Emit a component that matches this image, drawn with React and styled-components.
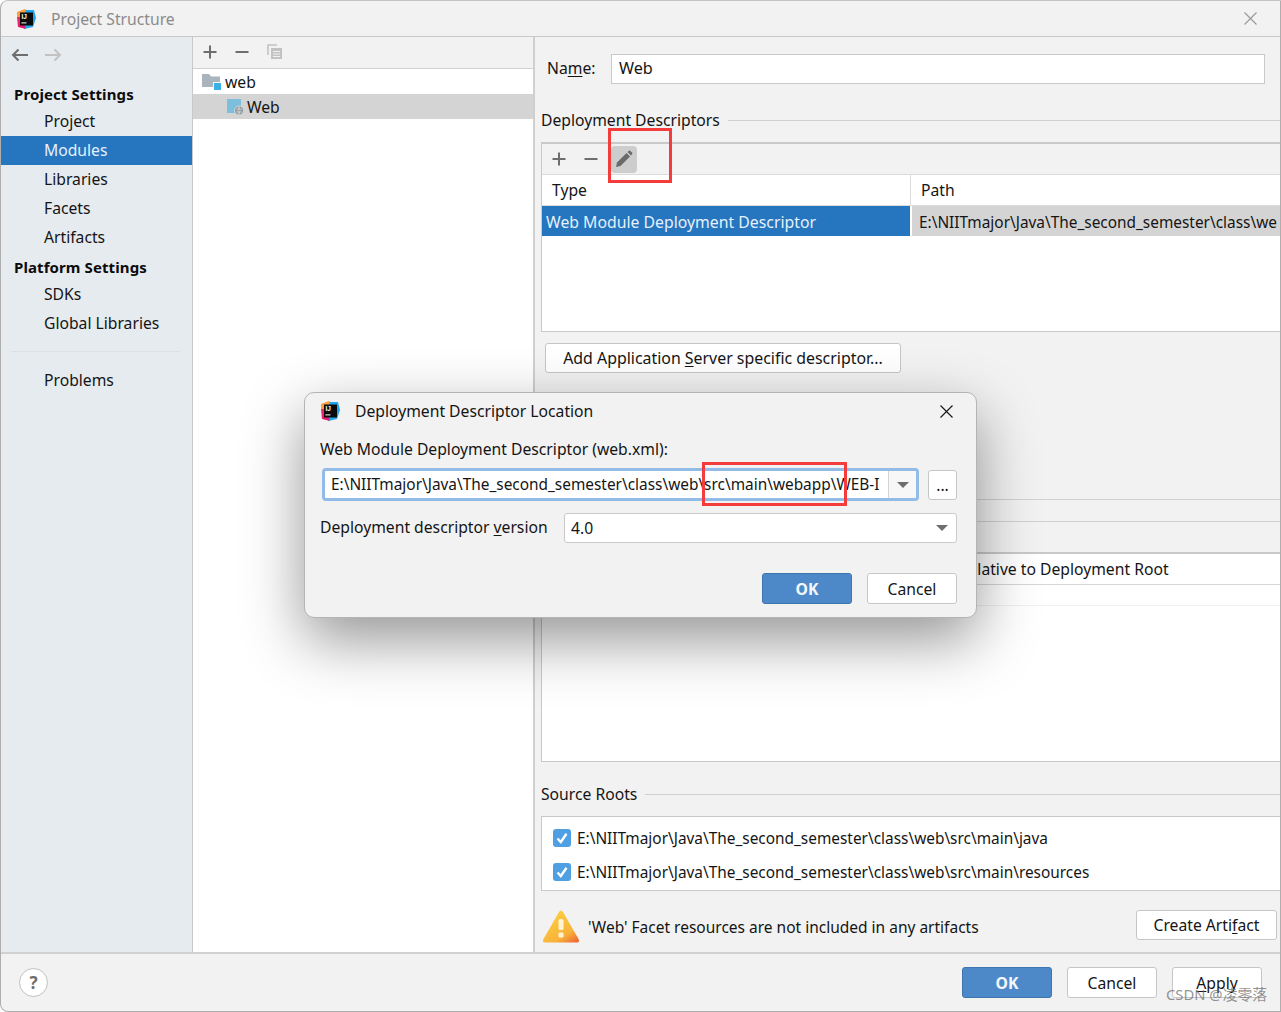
import React from 'react';
import styled, { createGlobalStyle } from 'styled-components';

const SOURCE_ROOTS = [
  'E:\\NIITmajor\\Java\\The_second_semester\\class\\web\\src\\main\\java',
  'E:\\NIITmajor\\Java\\The_second_semester\\class\\web\\src\\main\\resources',
];

function Logo({ size = 20 }) {
  return (
    <svg width={size} height={size} viewBox="0 0 20 20">
      <path d="M1 3 L9 0 L12 3 L4 10 L1 9 Z" fill="#ff9d3a" />
      <path d="M1 8 L5 8 L8 19 L2 18 Z" fill="#f0246f" />
      <path d="M10 1 L18 1 L20 9 L17 18 L8 20 L5 14 Z" fill="#1fa6f2" />
      <path d="M2 14 L8 15 L10 20 L3 18 Z" fill="#e8186f" />
      <rect x="4" y="3.5" width="13" height="13" fill="#0b0b0b" />
      <text x="5.4" y="10.4" fontSize="6.5" fontWeight="700" fontFamily="Liberation Sans, sans-serif" fill="#fff">IJ</text>
      <rect x="5.4" y="13.4" width="5" height="1" fill="#fff" />
    </svg>
  );
}

function BackIcon({ color, flip }) {
  return (
    <svg width="18" height="14" viewBox="0 0 18 14" style={flip ? { transform: 'scaleX(-1)' } : undefined}>
      <path d="M17 7 H2 M7.5 1.5 L2 7 L7.5 12.5" fill="none" stroke={color} strokeWidth="2" />
    </svg>
  );
}

function PlusIcon() {
  return (
    <svg width="14" height="14" viewBox="0 0 14 14">
      <path d="M7 0.5 V13.5 M0.5 7 H13.5" stroke="#6e6e6e" strokeWidth="2" fill="none" />
    </svg>
  );
}

function MinusIcon() {
  return (
    <svg width="14" height="14" viewBox="0 0 14 14">
      <path d="M0.5 7 H13.5" stroke="#6e6e6e" strokeWidth="2" fill="none" />
    </svg>
  );
}

function CopyIcon() {
  return (
    <svg width="16" height="16" viewBox="0 0 16 16">
      <path d="M1 11 V1 H10" fill="none" stroke="#c2c2c2" strokeWidth="1.6" />
      <rect x="4" y="4" width="11" height="11" fill="#c2c2c2" />
      <path d="M6 7.5 H13 M6 10 H13 M6 12.5 H13" stroke="#f2f2f2" strokeWidth="1" />
    </svg>
  );
}

function PencilIcon() {
  return (
    <svg width="18" height="18" viewBox="0 0 18 18">
      <path d="M1 17 L2 12.5 L11.5 3 L15 6.5 L5.5 16 Z" fill="#6a6a6a" />
      <path d="M12.5 2 L14 0.7 Q14.6 0.3 15.2 0.8 L17.2 2.8 Q17.6 3.4 17.2 4 L16 5.5 Z" fill="#6a6a6a" />
    </svg>
  );
}

function FolderIcon() {
  return (
    <svg width="19" height="18" viewBox="0 0 19 18">
      <path d="M0 1 H7 L9 3.5 H18 V14 H0 Z" fill="#aab4bc" />
      <rect x="11" y="9" width="8" height="8" fill="#f5f5f5" />
      <rect x="12" y="10" width="7" height="7" fill="#39b1e6" />
    </svg>
  );
}

function ModuleIcon() {
  return (
    <svg width="19" height="18" viewBox="0 0 19 18">
      <path d="M1 1 H15 V15 H1 Z" fill="#7bbfdc" />
      <circle cx="13" cy="12.5" r="5" fill="#d4d4d4" />
      <circle cx="13" cy="12.5" r="4" fill="#8e9aa3" />
      <path d="M10 11 H16 M10 14 H16 M13 8.5 Q11 12.5 13 16.5 M13 8.5 Q15 12.5 13 16.5" stroke="#d4d4d4" strokeWidth="0.7" fill="none" />
    </svg>
  );
}

function CloseIcon({ color, size = 13 }) {
  return (
    <svg width={size} height={size} viewBox="0 0 13 13">
      <path d="M0.5 0.5 L12.5 12.5 M12.5 0.5 L0.5 12.5" stroke={color} strokeWidth="1.2" fill="none" />
    </svg>
  );
}

function CheckIcon() {
  return (
    <svg width="18" height="18" viewBox="0 0 18 18">
      <rect width="18" height="18" rx="3" fill="#4f9fe3" />
      <path d="M4.5 9.5 L7.8 13 L13.5 4.8" fill="none" stroke="#fff" strokeWidth="2.4" />
    </svg>
  );
}

function WarningIcon() {
  return (
    <svg width="38" height="35" viewBox="0 0 38 35">
      <defs>
        <linearGradient id="warn" x1="0.3" y1="0.2" x2="0.9" y2="1">
          <stop offset="0" stopColor="#fbc93f" />
          <stop offset="0.65" stopColor="#f8b23a" />
          <stop offset="1" stopColor="#ee6a35" />
        </linearGradient>
      </defs>
      <path d="M19 1.5 Q20 1.5 21 3 L36.5 30 Q38 33.5 35 33.5 H3 Q0 33.5 1.5 30 L17 3 Q18 1.5 19 1.5 Z" fill="url(#warn)" />
      <rect x="16.5" y="10" width="5" height="11" rx="1.5" fill="#fff3d2" />
      <rect x="16.5" y="23.5" width="5" height="5" rx="1" fill="#fff3d2" />
    </svg>
  );
}

export default function App() {
  return (
    <Page>
      <GlobalStyle />
      <TitleBar>
        <LogoSlot><Logo /></LogoSlot>
        <WindowTitle>Project Structure</WindowTitle>
        <WindowClose><CloseIcon color="#9a9a9a" /></WindowClose>
      </TitleBar>

      <Body>
        <Sidebar>
          <NavArrows>
            <BackIcon color="#6e6e6e" />
            <BackIcon color="#c2c2c2" flip />
          </NavArrows>
          <SectionHead>Project Settings</SectionHead>
          <NavItem>Project</NavItem>
          <NavItem $selected>Modules</NavItem>
          <NavItem>Libraries</NavItem>
          <NavItem>Facets</NavItem>
          <NavItem>Artifacts</NavItem>
          <SectionHead>Platform Settings</SectionHead>
          <NavItem>SDKs</NavItem>
          <NavItem>Global Libraries</NavItem>
          <NavDivider />
          <NavItem>Problems</NavItem>
        </Sidebar>

        <TreePane>
          <TreeToolbar>
            <PlusIcon />
            <MinusIcon />
            <CopyIcon />
          </TreeToolbar>
          <TreeRow $indent={9} $gap={4}>
            <FolderIcon />
            <span>web</span>
          </TreeRow>
          <TreeRow $indent={33} $gap={2} $selected>
            <ModuleIcon />
            <span>Web</span>
          </TreeRow>
        </TreePane>

        <Details>
          <NameRow>
            <NameLabel>Na<u>m</u>e:</NameLabel>
            <NameInput>Web</NameInput>
          </NameRow>

          <GroupTitle $top={26}>
            <span>Deployment Descriptors</span>
          </GroupTitle>
          <DescriptorBox>
            <BoxToolbar>
              <PlusIcon />
              <MinusIcon />
              <ToolButton><PencilIcon /></ToolButton>
            </BoxToolbar>
            <TableHead>
              <TypeHead>Type</TypeHead>
              <PathHead>Path</PathHead>
            </TableHead>
            <TableRow>
              <TypeCell>Web Module Deployment Descriptor</TypeCell>
              <PathCell>E:\NIITmajor\Java\The_second_semester\class\we</PathCell>
            </TableRow>
          </DescriptorBox>
          <ServerButton>Add Application <u>S</u>erver specific descriptor...</ServerButton>

          <HiddenRows />
          <ResourceBox>
            <ResourceHead>
              <ResourcePath>Path Relative to Deployment Root</ResourcePath>
            </ResourceHead>
            <ResourceFiller />
          </ResourceBox>

          <GroupTitle $top={22}>
            <span>Source Roots</span>
          </GroupTitle>
          <RootsBox>
            {SOURCE_ROOTS.map((root) => (
              <RootRow key={root}>
                <CheckIcon />
                <span>{root}</span>
              </RootRow>
            ))}
          </RootsBox>

          <WarningRow>
            <WarningIcon />
            <WarningText>'Web' Facet resources are not included in any artifacts</WarningText>
            <ArtifactButton>Create Arti<u>f</u>act</ArtifactButton>
          </WarningRow>
        </Details>
      </Body>

      <Footer>
        <HelpButton>?</HelpButton>
        <FooterButtons>
          <PrimaryButton>OK</PrimaryButton>
          <PlainButton>Cancel</PlainButton>
          <PlainButton><u>A</u>pply</PlainButton>
        </FooterButtons>
      </Footer>

      <Dialog>
        <DialogTitle>
          <Logo />
          <DialogName>Deployment Descriptor Location</DialogName>
          <CloseIcon color="#1a1a1a" />
        </DialogTitle>
        <FieldLabel>Web Module Deployment Descriptor (web.xml):</FieldLabel>
        <PathField>
          <Combo>
            <ComboText>E:\NIITmajor\Java\The_second_semester\class\web\src\main\webapp\WEB-I</ComboText>
            <ComboArrow><Caret /></ComboArrow>
          </Combo>
          <BrowseButton>...</BrowseButton>
        </PathField>
        <VersionRow>
          <VersionLabel>Deployment descriptor <u>v</u>ersion</VersionLabel>
          <VersionSelect>
            <span>4.0</span>
            <Caret />
          </VersionSelect>
        </VersionRow>
        <DialogButtons>
          <PrimaryButton>OK</PrimaryButton>
          <PlainButton>Cancel</PlainButton>
        </DialogButtons>
      </Dialog>

      <Callout $left={607} $top={127} $width={64} $height={55} />
      <Callout $left={701} $top={461} $width={145} $height={44} />
      <Watermark>CSDN @凌零落</Watermark>
    </Page>
  );
}

const GlobalStyle = createGlobalStyle`
  html, body {
    margin: 0;
    padding: 0;
    background: #fff;
    overflow: hidden;
  }
  u {
    text-underline-offset: 2px;
  }
`;

const Page = styled.div`
  position: relative;
  box-sizing: border-box;
  width: 1281px;
  height: 1012px;
  display: flex;
  flex-direction: column;
  overflow: hidden;
  background: #f2f2f2;
  border: 1px solid #aeaeae;
  border-top-color: #c4c4c4;
  border-radius: 8px 0 0 8px;
  color: #151515;
  font-family: 'Noto Sans', sans-serif;
  font-size: 15.7px;
`;

const TitleBar = styled.header`
  flex: none;
  height: 36px;
  display: flex;
  align-items: center;
  box-sizing: border-box;
  border-bottom: 1px solid #c9c9c9;
`;

const LogoSlot = styled.div`
  display: flex;
  margin: 0 15px 0 15px;
`;

const WindowTitle = styled.div`
  color: #8b8b8b;
  flex: 1;
`;

const WindowClose = styled.div`
  display: flex;
  margin-right: 23px;
`;

const Body = styled.div`
  flex: none;
  height: 915px;
  display: flex;
`;

const Sidebar = styled.nav`
  flex: none;
  box-sizing: border-box;
  width: 192px;
  background: #e6ebf0;
  border-right: 1px solid #c9c9c9;
`;

const NavArrows = styled.div`
  box-sizing: border-box;
  height: 42px;
  padding: 0 0 6px 10px;
  display: flex;
  align-items: center;
  gap: 15px;
`;

const SectionHead = styled.div`
  height: 28px;
  line-height: 30px;
  padding-left: 13px;
  font-size: 15px;
  font-weight: 700;
  color: #0c0c0c;
  letter-spacing: 0.1px;
`;

const NavItem = styled.div`
  height: 29px;
  line-height: 29px;
  padding-left: 43px;
  background: ${(p) => (p.$selected ? '#2675bf' : 'transparent')};
  color: ${(p) => (p.$selected ? '#e4f1fc' : 'inherit')};
`;

const NavDivider = styled.div`
  height: 1px;
  margin: 13px 12px 14px 10px;
  background: #dcdfe3;
`;

const TreePane = styled.aside`
  flex: none;
  box-sizing: border-box;
  width: 342px;
  background: #fff;
  border-right: 2px solid #cfcfcf;
`;

const TreeToolbar = styled.div`
  box-sizing: border-box;
  height: 32px;
  padding: 0 0 1px 10px;
  display: flex;
  align-items: center;
  gap: 18px;
  background: #f2f2f2;
  border-bottom: 1px solid #d0d0d0;
`;

const TreeRow = styled.div`
  height: 25px;
  display: flex;
  align-items: center;
  gap: ${(p) => p.$gap}px;
  padding-left: ${(p) => p.$indent}px;
  background: ${(p) => (p.$selected ? '#d4d4d4' : 'transparent')};
`;

const Details = styled.main`
  flex: 1;
  min-width: 0;
  padding: 17px 0 0 6px;
`;

const NameRow = styled.div`
  display: flex;
  align-items: center;
  height: 30px;
`;

const NameLabel = styled.label`
  width: 70px;
  padding: 0 0 2px 6px;
  box-sizing: border-box;
  flex: none;
`;

const NameInput = styled.div`
  box-sizing: border-box;
  width: 654px;
  height: 30px;
  line-height: 26px;
  padding-left: 7px;
  background: #fff;
  border: 1px solid #c9c9c9;
  font-size: 16.2px;
`;

const GroupTitle = styled.div`
  margin-top: ${(p) => p.$top}px;
  height: 20px;
  line-height: 20px;
  display: flex;
  align-items: center;
  gap: 8px;
  &::after {
    content: '';
    flex: 1;
    height: 1px;
    background: #d0d0d0;
  }
`;

const DescriptorBox = styled.section`
  box-sizing: border-box;
  height: 190px;
  margin-top: 12px;
  background: #fff;
  border: 1px solid #c9c9c9;
  border-top-width: 2px;
  border-right: none;
`;

const BoxToolbar = styled.div`
  box-sizing: border-box;
  height: 31px;
  display: flex;
  align-items: center;
  gap: 18px;
  padding-left: 10px;
  background: #f2f2f2;
  border-bottom: 1px solid #dcdcdc;
`;

const ToolButton = styled.div`
  width: 26px;
  height: 27px;
  margin-left: -5px;
  display: flex;
  align-items: center;
  justify-content: center;
  border-radius: 4px;
  background: #cdcdcd;
`;

const TableHead = styled.div`
  height: 31px;
  display: flex;
  align-items: center;
  border-bottom: 1px solid #dcdcdc;
  box-sizing: border-box;
`;

const TypeHead = styled.div`
  box-sizing: border-box;
  width: 369px;
  height: 100%;
  line-height: 30px;
  padding-left: 10px;
  border-right: 1px solid #dcdcdc;
`;

const PathHead = styled.div`
  padding-left: 10px;
`;

const TableRow = styled.div`
  height: 30px;
  line-height: 32px;
  display: flex;
`;

const TypeCell = styled.div`
  flex: none;
  box-sizing: border-box;
  width: 368px;
  padding-left: 4px;
  background: #2675bf;
  color: #e4f1fc;
  font-size: 15.8px;
`;

const PathCell = styled.div`
  flex: 1;
  min-width: 0;
  margin-left: 2px;
  padding-left: 7px;
  background: #d4d4d4;
  white-space: nowrap;
  overflow: hidden;
  font-size: 15.4px;
  line-height: 33px;
`;

const ButtonBase = styled.button`
  box-sizing: border-box;
  margin: 0;
  padding: 0;
  background: #fff;
  border: 1px solid #c6c6c6;
  border-radius: 3px;
  color: #151515;
  font-family: inherit;
  font-size: 15.7px;
`;

const ServerButton = styled(ButtonBase)`
  display: block;
  width: 356px;
  height: 30px;
  margin: 11px 0 0 4px;
  font-size: 15.9px;
`;

const HiddenRows = styled.div`
  box-sizing: border-box;
  height: 23px;
  margin-top: 126px;
  border-top: 1px solid #d0d0d0;
  border-bottom: 1px solid #d0d0d0;
`;

const ResourceBox = styled.section`
  box-sizing: border-box;
  height: 210px;
  margin-top: 30px;
  background: #fff;
  border: 1px solid #c9c9c9;
  border-top-width: 2px;
  border-right: none;
`;

const ResourceHead = styled.div`
  box-sizing: border-box;
  height: 31px;
  line-height: 30px;
  padding-left: 379px;
  border-bottom: 1px solid #d6d6d6;
`;

const ResourcePath = styled.div`
  white-space: nowrap;
`;

const ResourceFiller = styled.div`
  height: 20px;
  border-bottom: 1px solid #f0f0f0;
`;

const RootsBox = styled.section`
  box-sizing: border-box;
  height: 75px;
  margin-top: 12px;
  padding-top: 4px;
  background: #fff;
  border: 1px solid #c9c9c9;
  border-right: none;
`;

const RootRow = styled.div`
  height: 34px;
  display: flex;
  align-items: center;
  gap: 6px;
  padding-left: 11px;
  font-size: 15.4px;
`;

const WarningRow = styled.div`
  display: flex;
  align-items: center;
  height: 36px;
  margin-top: 17px;
  padding-left: 1px;
`;

const WarningText = styled.div`
  flex: 1;
  margin-left: 8px;
  padding-top: 2px;
  font-size: 15.5px;
`;

const ArtifactButton = styled(ButtonBase)`
  flex: none;
  width: 141px;
  height: 30px;
  margin: -3px 3px 0 0;
`;

const Footer = styled.footer`
  flex: 1;
  display: flex;
  align-items: center;
  justify-content: space-between;
  padding: 0 18px 0 18px;
  border-top: 2px solid #d0d0d0;
`;

const HelpButton = styled.div`
  box-sizing: border-box;
  width: 29px;
  height: 29px;
  display: flex;
  align-items: center;
  justify-content: center;
  background: #fff;
  border: 1px solid #c0c0c0;
  border-radius: 50%;
  color: #6e6e6e;
  font-weight: 700;
  font-size: 17px;
`;

const FooterButtons = styled.div`
  display: flex;
  gap: 15px;
`;

const PrimaryButton = styled(ButtonBase)`
  width: 90px;
  height: 31px;
  background: #4d89c9;
  border-color: #3f75ae;
  color: #f4f8fc;
  font-weight: 700;
`;

const PlainButton = styled(ButtonBase)`
  width: 90px;
  height: 31px;
`;

const Dialog = styled.div`
  position: absolute;
  left: 303px;
  top: 391px;
  box-sizing: border-box;
  width: 673px;
  height: 226px;
  padding: 0 19px 0 15px;
  background: #f2f2f2;
  border: 1px solid #b4b4b4;
  border-radius: 10px;
  box-shadow: 0 22px 60px rgba(0, 0, 0, 0.42);
`;

const DialogTitle = styled.div`
  height: 36px;
  display: flex;
  align-items: center;
  padding-right: 4px;
`;

const DialogName = styled.div`
  flex: 1;
  margin-left: 15px;
`;

const FieldLabel = styled.div`
  margin-top: 9px;
  height: 22px;
  line-height: 22px;
`;

const PathField = styled.div`
  margin-top: 8px;
  display: flex;
  align-items: center;
  gap: 9px;
  padding-left: 2px;
`;

const Combo = styled.div`
  box-sizing: border-box;
  width: 597px;
  height: 33px;
  display: flex;
  background: #fff;
  border: 3px solid #93bbe8;
  border-radius: 4px;
`;

const ComboText = styled.div`
  flex: 1;
  min-width: 0;
  padding-left: 6px;
  line-height: 27px;
  white-space: nowrap;
  overflow: hidden;
  font-size: 15.4px;
`;

const ComboArrow = styled.div`
  flex: none;
  width: 27px;
  display: flex;
  align-items: center;
  justify-content: center;
  background: #f7f7f7;
  border-left: 1px solid #d4d4d4;
`;

const Caret = styled.div`
  width: 0;
  height: 0;
  border-left: 6px solid transparent;
  border-right: 6px solid transparent;
  border-top: 6px solid #6e6e6e;
`;

const BrowseButton = styled(ButtonBase)`
  width: 29px;
  height: 30px;
`;

const VersionRow = styled.div`
  margin-top: 12px;
  display: flex;
  align-items: center;
  gap: 17px;
`;

const VersionLabel = styled.label`
  box-sizing: border-box;
  flex: none;
  width: 227px;
  padding-bottom: 3px;
  white-space: nowrap;
`;

const VersionSelect = styled.div`
  box-sizing: border-box;
  flex: 1;
  height: 30px;
  display: flex;
  align-items: center;
  justify-content: space-between;
  padding: 0 8px 0 6px;
  background: #fff;
  border: 1px solid #c9c9c9;
  border-radius: 3px;
`;

const DialogButtons = styled.div`
  margin-top: 30px;
  display: flex;
  justify-content: flex-end;
  gap: 15px;
`;

const Callout = styled.div`
  position: absolute;
  left: ${(p) => p.$left}px;
  top: ${(p) => p.$top}px;
  width: ${(p) => p.$width}px;
  height: ${(p) => p.$height}px;
  box-sizing: border-box;
  border: 3px solid #f43c3c;
  pointer-events: none;
`;

const Watermark = styled.div`
  position: absolute;
  left: 1165px;
  top: 982px;
  color: rgba(110, 110, 110, 0.75);
  font-family: 'Noto Sans', 'Noto Sans CJK SC', sans-serif;
  font-size: 14.8px;
  white-space: nowrap;
`;
